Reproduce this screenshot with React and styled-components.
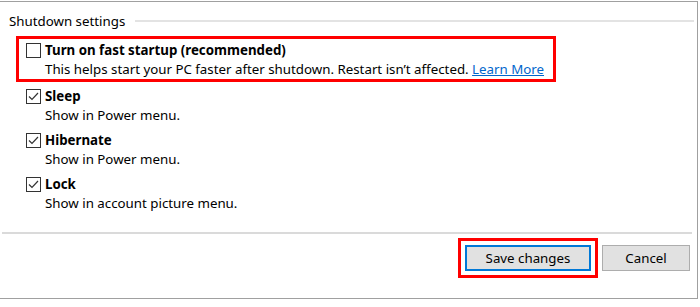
import React from "react";
import styled, { createGlobalStyle } from "styled-components";

const GlobalStyle = createGlobalStyle`
  html, body {
    margin: 0;
    padding: 0;
    background: #ffffff;
  }
  body {
    font-family: "Noto Sans", "Open Sans", sans-serif;
    font-size: 13.3px;
    color: #000000;
  }
`;

const Frame = styled.div`
  box-sizing: border-box;
  width: 698px;
  height: 298px;
  margin-top: 1px;
  border-top: 1px solid #a0a0a0;
  border-right: 1px solid #a0a0a0;
  border-bottom: 1px solid #a0a0a0;
  padding-top: 9px;
  display: flex;
  flex-direction: column;
`;

const GroupHeader = styled.div`
  display: flex;
  align-items: center;
  height: 20px;
  padding-left: 9px;
  padding-right: 3px;
`;

const Legend = styled.span`
  white-space: nowrap;
`;

const HeaderRule = styled.div`
  flex: 1;
  height: 2px;
  margin-left: 10px;
  background: #e3e3e3;
`;

const OptionList = styled.div`
  display: flex;
  flex-direction: column;
  align-items: flex-start;
  margin-top: 5px;
  padding-left: 16px;
`;

const Option = styled.div`
  box-sizing: border-box;
  display: flex;
  align-items: flex-start;
  gap: 4px;
  border: ${(p) => (p.$highlight ? "3px solid #ff0000" : "0")};
  padding: ${(p) => (p.$highlight ? "2px 9px 0 7px" : "5px 0 1px 10px")};
  line-height: 19px;
`;

const BoxSlot = styled.div`
  height: 19px;
  display: flex;
  align-items: center;
`;

const Texts = styled.div`
  display: flex;
  flex-direction: column;
`;

const Title = styled.div`
  font-weight: 700;
  white-space: nowrap;
`;

const Desc = styled.div`
  white-space: nowrap;
`;

const Link = styled.a`
  color: #0066cc;
  text-decoration: underline;
  cursor: pointer;
`;

const Separator = styled.div`
  height: 2px;
  margin: 18px 5px 0 2px;
  background: #dadada;
`;

const Footer = styled.div`
  display: flex;
  justify-content: flex-end;
  align-items: center;
  gap: 4px;
  padding: 4px 7px 0 0;
`;

const Focus = styled.div`
  border: 3px solid #ff0000;
  padding: 4px;
  display: flex;
`;

const Button = styled.button`
  box-sizing: border-box;
  width: ${(p) => p.$width}px;
  height: 26px;
  font-family: inherit;
  font-size: 13.3px;
  color: #000000;
  background: #e1e1e1;
  border: ${(p) => (p.$default ? "2px solid #0078d7" : "1px solid #adadad")};
  padding: 0;
`;

const Checkbox = ({ checked }) => (
  <svg width="15" height="15" viewBox="0 0 15 15">
    <rect x="0.5" y="0.5" width="14" height="14" fill="#ffffff" stroke="#333333" />
    {checked && (
      <path
        d="M3 7.5 L6 10.5 L12 4"
        fill="none"
        stroke="#333333"
        strokeWidth="1.2"
      />
    )}
  </svg>
);

const options = [
  {
    title: "Turn on fast startup (recommended)",
    desc: "This helps start your PC faster after shutdown. Restart isn’t affected.",
    link: "Learn More",
    checked: false,
    highlight: true,
  },
  { title: "Sleep", desc: "Show in Power menu.", checked: true },
  { title: "Hibernate", desc: "Show in Power menu.", checked: true },
  { title: "Lock", desc: "Show in account picture menu.", checked: true },
];

const App = () => (
  <>
    <GlobalStyle />
    <Frame>
      <GroupHeader>
        <Legend>Shutdown settings</Legend>
        <HeaderRule />
      </GroupHeader>
      <OptionList>
        {options.map((o) => (
          <Option key={o.title} $highlight={o.highlight}>
            <BoxSlot>
              <Checkbox checked={o.checked} />
            </BoxSlot>
            <Texts>
              <Title>{o.title}</Title>
              <Desc>
                {o.desc}
                {o.link && (
                  <>
                    {" "}
                    <Link>{o.link}</Link>
                  </>
                )}
              </Desc>
            </Texts>
          </Option>
        ))}
      </OptionList>
      <Separator />
      <Footer>
        <Focus>
          <Button $default $width={126}>
            Save changes
          </Button>
        </Focus>
        <Button $width={88}>Cancel</Button>
      </Footer>
    </Frame>
  </>
);

export default App;
